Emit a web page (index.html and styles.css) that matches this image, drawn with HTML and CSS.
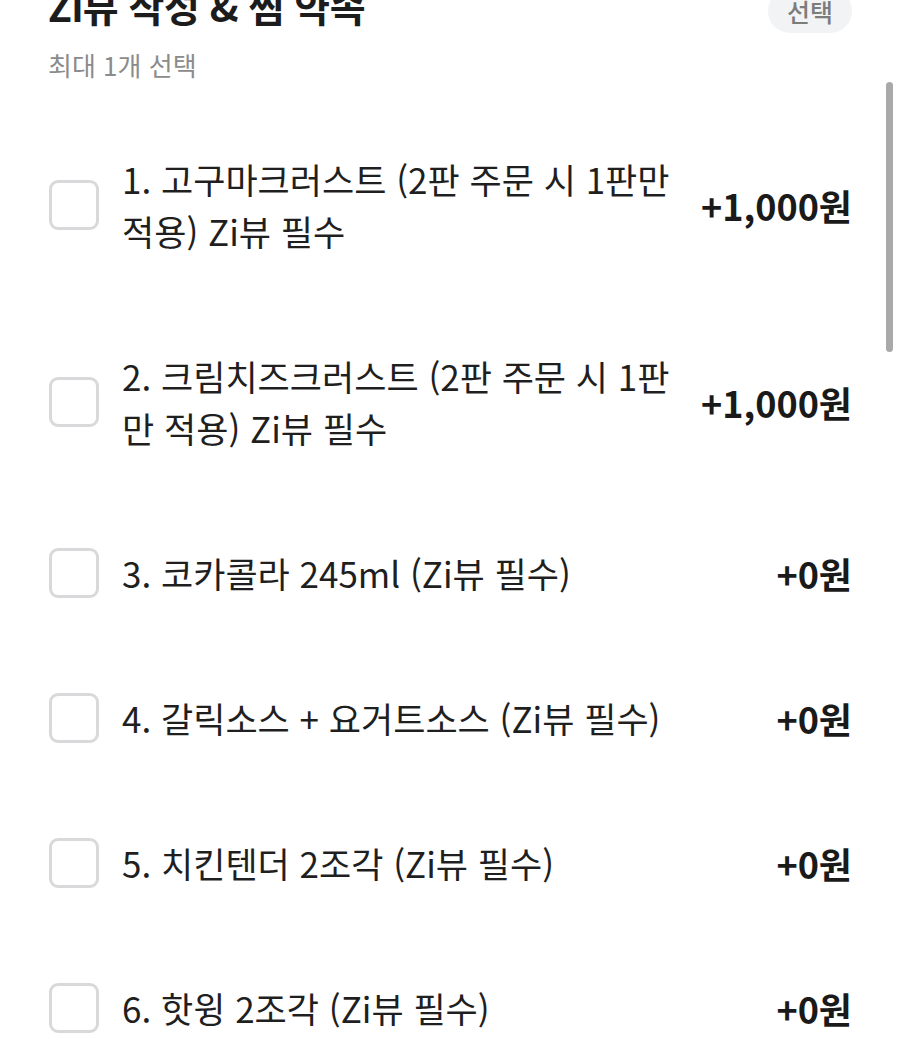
FILE: index.html
```html
<!DOCTYPE html>
<html lang="ko">
<head>
<meta charset="utf-8">
<link rel="stylesheet" href="styles.css">
</head>
<body>
<div class="page">
  <div class="header">
    <div class="header-text">
      <h2 class="title">Zi뷰 작성 &amp; 찜 약속</h2>
      <p class="subtitle">최대 1개 선택</p>
    </div>
    <span class="badge">선택</span>
  </div>
  <ul class="options">
    <li class="option"><span class="check"></span><span class="label">1. 고구마크러스트 (2판 주문 시 1판만 적용) Zi뷰 필수</span><span class="price">+1,000원</span></li>
    <li class="option"><span class="check"></span><span class="label">2. 크림치즈크러스트 (2판 주문 시 1판만 적용) Zi뷰 필수</span><span class="price">+1,000원</span></li>
    <li class="option"><span class="check"></span><span class="label">3. 코카콜라 245ml (Zi뷰 필수)</span><span class="price">+0원</span></li>
    <li class="option"><span class="check"></span><span class="label">4. 갈릭소스 + 요거트소스 (Zi뷰 필수)</span><span class="price">+0원</span></li>
    <li class="option"><span class="check"></span><span class="label">5. 치킨텐더 2조각 (Zi뷰 필수)</span><span class="price">+0원</span></li>
    <li class="option"><span class="check"></span><span class="label">6. 핫윙 2조각 (Zi뷰 필수)</span><span class="price">+0원</span></li>
  </ul>
  <div class="scrollbar"></div>
</div>
</body>
</html>
```

FILE: styles.css
```css
html, body {
  margin: 0;
  padding: 0;
  background: #ffffff;
}
body {
  font-family: "Noto Sans CJK KR", "Noto Sans", sans-serif;
  color: #222222;
  overflow: hidden;
  height: 1060px;
}
.page {
  position: relative;
  display: flow-root;
  padding: 0 48px 0 48px;
}
.header {
  display: flex;
  justify-content: space-between;
  align-items: flex-start;
  margin-top: -18px;
}
.title {
  margin: 0;
  font-size: 39px;
  font-weight: 700;
  line-height: 46px;
  color: #1c1c1c;
  letter-spacing: -0.5px;
}
.subtitle {
  margin: 20px 0 0;
  font-size: 26px;
  line-height: 34px;
  color: #8b8b8b;
}
.badge {
  margin-top: 7px;
  width: 84px;
  height: 44px;
  border-radius: 22px;
  background: #f2f3f5;
  color: #7c7c7c;
  font-size: 25px;
  font-weight: 500;
  display: flex;
  align-items: center;
  justify-content: center;
}
.options {
  list-style: none;
  margin: 24px 0 0;
  padding: 0;
}
.option {
  display: flex;
  align-items: center;
  padding: 46.5px 0;
}
.check {
  flex: none;
  width: 44px;
  height: 44px;
  border: 3px solid #d9d9db;
  border-radius: 9px;
  margin-left: 1px;
}
.label {
  flex: 1;
  margin-left: 23px;
  margin-right: 30px;
  font-size: 35px;
  line-height: 52px;
  color: #1f1f1f;
}
.price {
  flex: none;
  font-size: 36px;
  font-weight: 700;
  line-height: 52px;
  color: #1a1a1a;
}
.scrollbar {
  position: absolute;
  left: 886px;
  top: 82px;
  width: 7px;
  height: 270px;
  border-radius: 4px;
  background: #a9a9a9;
}
```
